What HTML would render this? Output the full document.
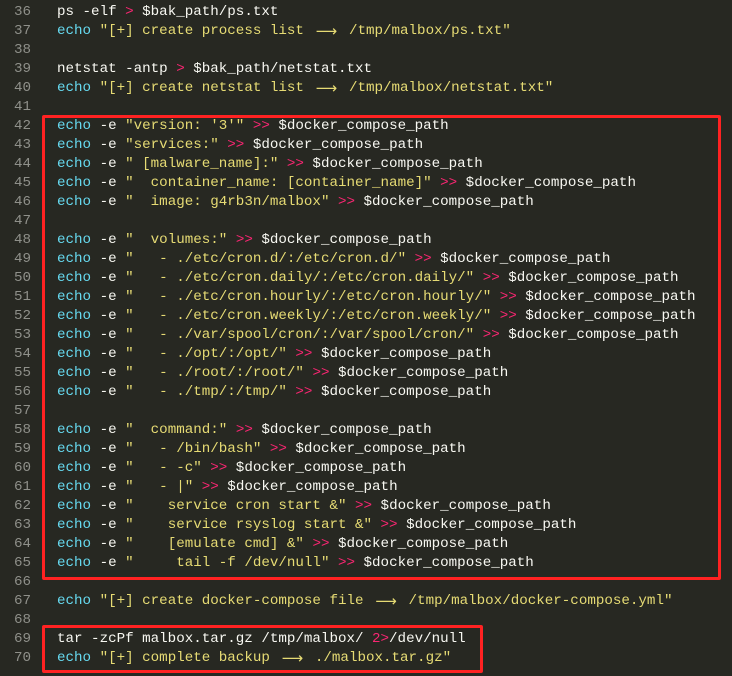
<!DOCTYPE html>
<html><head><meta charset="utf-8"><style>
html,body{margin:0;padding:0;background:#272822;}
body{width:732px;height:676px;overflow:hidden;position:relative;font-family:"Liberation Mono",monospace;font-size:14.2px;}
.g{position:absolute;left:0;top:3px;width:31px;text-align:right;color:#8f908a;line-height:19px;white-space:pre;}
.c{position:absolute;left:57px;top:3px;color:#f8f8f2;line-height:19px;white-space:pre;}
.k{color:#66d9ef}.s{color:#e6db74}.o{color:#f92672}
.a{display:inline-block;width:28px;height:19px;line-height:19px;vertical-align:top;text-align:center;font-family:"DejaVu Sans",sans-serif;font-size:15px;}
.box{position:absolute;border:3px solid #ff2222;border-radius:2px;box-sizing:border-box;}
</style></head><body>
<div class="g">36
37
38
39
40
41
42
43
44
45
46
47
48
49
50
51
52
53
54
55
56
57
58
59
60
61
62
63
64
65
66
67
68
69
70</div>
<div class="c">ps -elf <span class="o">&gt;</span> $bak_path/ps.txt
<span class="k">echo</span> <span class="s">"[+] create process list <span class="a">⟶</span> /tmp/malbox/ps.txt"</span>

netstat -antp <span class="o">&gt;</span> $bak_path/netstat.txt
<span class="k">echo</span> <span class="s">"[+] create netstat list <span class="a">⟶</span> /tmp/malbox/netstat.txt"</span>

<span class="k">echo</span> -e <span class="s">"version: '3'"</span> <span class="o">&gt;&gt;</span> $docker_compose_path
<span class="k">echo</span> -e <span class="s">"services:"</span> <span class="o">&gt;&gt;</span> $docker_compose_path
<span class="k">echo</span> -e <span class="s">" [malware_name]:"</span> <span class="o">&gt;&gt;</span> $docker_compose_path
<span class="k">echo</span> -e <span class="s">"  container_name: [container_name]"</span> <span class="o">&gt;&gt;</span> $docker_compose_path
<span class="k">echo</span> -e <span class="s">"  image: g4rb3n/malbox"</span> <span class="o">&gt;&gt;</span> $docker_compose_path

<span class="k">echo</span> -e <span class="s">"  volumes:"</span> <span class="o">&gt;&gt;</span> $docker_compose_path
<span class="k">echo</span> -e <span class="s">"   - ./etc/cron.d/:/etc/cron.d/"</span> <span class="o">&gt;&gt;</span> $docker_compose_path
<span class="k">echo</span> -e <span class="s">"   - ./etc/cron.daily/:/etc/cron.daily/"</span> <span class="o">&gt;&gt;</span> $docker_compose_path
<span class="k">echo</span> -e <span class="s">"   - ./etc/cron.hourly/:/etc/cron.hourly/"</span> <span class="o">&gt;&gt;</span> $docker_compose_path
<span class="k">echo</span> -e <span class="s">"   - ./etc/cron.weekly/:/etc/cron.weekly/"</span> <span class="o">&gt;&gt;</span> $docker_compose_path
<span class="k">echo</span> -e <span class="s">"   - ./var/spool/cron/:/var/spool/cron/"</span> <span class="o">&gt;&gt;</span> $docker_compose_path
<span class="k">echo</span> -e <span class="s">"   - ./opt/:/opt/"</span> <span class="o">&gt;&gt;</span> $docker_compose_path
<span class="k">echo</span> -e <span class="s">"   - ./root/:/root/"</span> <span class="o">&gt;&gt;</span> $docker_compose_path
<span class="k">echo</span> -e <span class="s">"   - ./tmp/:/tmp/"</span> <span class="o">&gt;&gt;</span> $docker_compose_path

<span class="k">echo</span> -e <span class="s">"  command:"</span> <span class="o">&gt;&gt;</span> $docker_compose_path
<span class="k">echo</span> -e <span class="s">"   - /bin/bash"</span> <span class="o">&gt;&gt;</span> $docker_compose_path
<span class="k">echo</span> -e <span class="s">"   - -c"</span> <span class="o">&gt;&gt;</span> $docker_compose_path
<span class="k">echo</span> -e <span class="s">"   - |"</span> <span class="o">&gt;&gt;</span> $docker_compose_path
<span class="k">echo</span> -e <span class="s">"    service cron start &amp;"</span> <span class="o">&gt;&gt;</span> $docker_compose_path
<span class="k">echo</span> -e <span class="s">"    service rsyslog start &amp;"</span> <span class="o">&gt;&gt;</span> $docker_compose_path
<span class="k">echo</span> -e <span class="s">"    [emulate cmd] &amp;"</span> <span class="o">&gt;&gt;</span> $docker_compose_path
<span class="k">echo</span> -e <span class="s">"     tail -f /dev/null"</span> <span class="o">&gt;&gt;</span> $docker_compose_path

<span class="k">echo</span> <span class="s">"[+] create docker-compose file <span class="a">⟶</span> /tmp/malbox/docker-compose.yml"</span>

tar -zcPf malbox.tar.gz /tmp/malbox/ <span class="o">2&gt;</span>/dev/null
<span class="k">echo</span> <span class="s">"[+] complete backup <span class="a">⟶</span> ./malbox.tar.gz"</span></div>
<div class="box" style="left:42px;top:115px;width:679px;height:465px"></div>
<div class="box" style="left:42px;top:625px;width:441px;height:48px"></div>
</body></html>
